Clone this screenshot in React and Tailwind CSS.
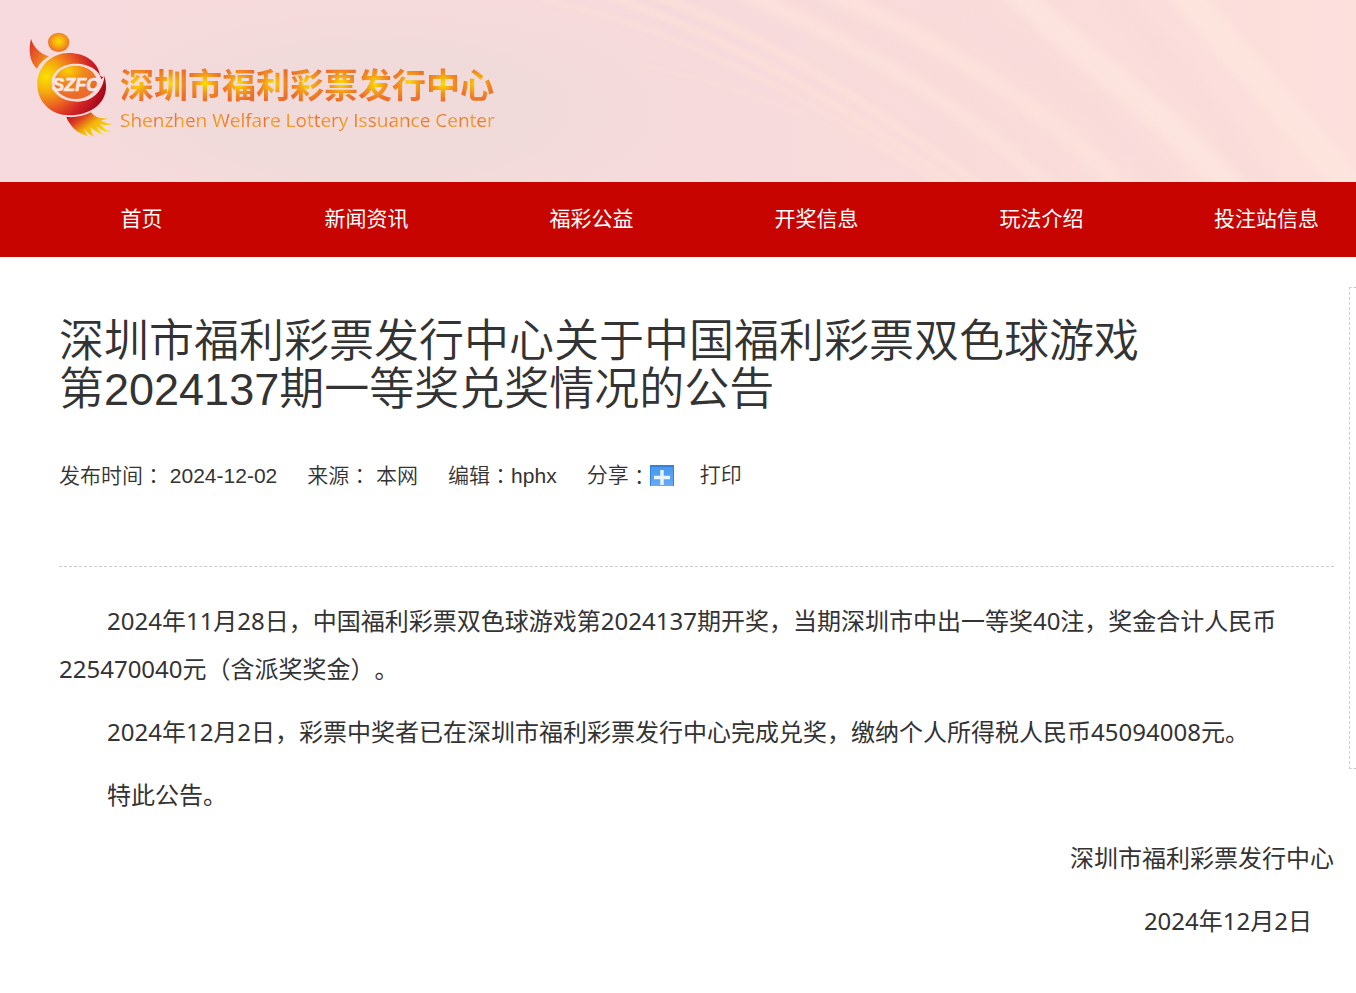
import React from 'react';

const navItems = ['首页', '新闻资讯', '福彩公益', '开奖信息', '玩法介绍', '投注站信息'];

const siteName = '深圳市福利彩票发行中心';

const HeaderBackground = () => (
  <svg className="absolute inset-0 w-full h-full" viewBox="0 0 1356 182" preserveAspectRatio="none" aria-hidden="true">
    <defs>
      <linearGradient id="bgBase" x1="0" y1="0" x2="1" y2="0">
        <stop offset="0" stopColor="#f7dadd" />
        <stop offset="0.5" stopColor="#f6dadc" />
        <stop offset="0.7" stopColor="#f9dcda" />
        <stop offset="1" stopColor="#fde0dc" />
      </linearGradient>
      <radialGradient id="bgShade" cx="0.5" cy="0.5" r="0.5">
        <stop offset="0" stopColor="#f0dada" />
        <stop offset="0.6" stopColor="#f1dada" stopOpacity="0.8" />
        <stop offset="1" stopColor="#f5dadc" stopOpacity="0" />
      </radialGradient>
      <filter id="soft" filterUnits="userSpaceOnUse" x="-20" y="-40" width="1400" height="270" colorInterpolationFilters="sRGB">
        <feGaussianBlur stdDeviation="5" />
      </filter>
      <filter id="fine" filterUnits="userSpaceOnUse" x="-20" y="-40" width="1400" height="270" colorInterpolationFilters="sRGB">
        <feGaussianBlur stdDeviation="2" />
      </filter>
    </defs>
    <rect width="1356" height="182" fill="url(#bgBase)" />
    <ellipse cx="370" cy="110" rx="330" ry="120" fill="url(#bgShade)" />
    <g fill="none" stroke="#fde3dc" filter="url(#soft)">
      <path d="M740 -10 C830 28 980 110 1060 195" strokeWidth="16" opacity="0.8" />
      <path d="M820 -10 C920 30 1040 100 1130 195" strokeWidth="16" opacity="0.7" />
    </g>
    <g fill="none" stroke="#fde6de" filter="url(#soft)">
      <path d="M1005 -20 C1060 40 1150 100 1240 195" strokeWidth="24" opacity="0.8" />
      <path d="M1175 -20 C1220 40 1290 110 1360 200" strokeWidth="28" opacity="0.9" />
    </g>
    <g fill="none" stroke="#fcdfd9" filter="url(#fine)">
      <path d="M540 0 C680 25 830 110 960 195" strokeWidth="6" opacity="0.6" />
      <path d="M600 -6 C720 30 850 110 965 190" strokeWidth="8" opacity="0.7" />
      <path d="M650 -6 C760 30 880 110 985 190" strokeWidth="10" opacity="0.7" />
      <path d="M640 65 C760 90 860 135 950 190" strokeWidth="4" opacity="0.5" />
    </g>
    <g fill="none" stroke="#f8dad9" filter="url(#soft)">
      <path d="M780 -5 C870 40 990 110 1070 195" strokeWidth="12" opacity="0.6" />
      <path d="M940 -5 C1010 45 1100 110 1180 195" strokeWidth="22" opacity="0.5" />
      <path d="M1110 -5 C1160 50 1220 120 1270 195" strokeWidth="26" opacity="0.4" />
    </g>
  </svg>
);

const LogoMark = () => (
  <svg className="w-[100px] h-[120px] shrink-0" viewBox="0 0 300 360" role="img" aria-label="SZFC">
    <defs>
      <radialGradient id="head" cx="0.5" cy="0.45" r="0.55">
        <stop offset="0" stopColor="#fbe000" />
        <stop offset="0.5" stopColor="#f6a912" />
        <stop offset="1" stopColor="#ec6a2a" />
      </radialGradient>
      <linearGradient id="arm" x1="0" y1="0.2" x2="0.8" y2="0.9">
        <stop offset="0" stopColor="#dc3626" />
        <stop offset="0.5" stopColor="#ea6524" />
        <stop offset="1" stopColor="#f39a18" />
      </linearGradient>
      <radialGradient id="body" gradientUnits="userSpaceOnUse" cx="78" cy="155" r="190">
        <stop offset="0" stopColor="#fbe300" />
        <stop offset="0.25" stopColor="#f5a80f" />
        <stop offset="0.5" stopColor="#ea5b22" />
        <stop offset="0.7" stopColor="#d22426" />
        <stop offset="1" stopColor="#a00018" />
      </radialGradient>
      <radialGradient id="core" cx="0.32" cy="0.15" r="0.75">
        <stop offset="0" stopColor="#f9d000" />
        <stop offset="0.5" stopColor="#f0861f" />
        <stop offset="1" stopColor="#ec6a2a" />
      </radialGradient>
      <linearGradient id="tail" x1="0" y1="0" x2="1" y2="0.7">
        <stop offset="0.1" stopColor="#bf0a22" />
        <stop offset="0.35" stopColor="#df4a20" />
        <stop offset="0.6" stopColor="#f2b40c" />
        <stop offset="1" stopColor="#f7e400" />
      </linearGradient>
    </defs>
    <ellipse cx="116" cy="52" rx="32" ry="29" fill="url(#head)" />
    <path d="M33 41 C24 78 30 112 51 131 C59 115 71 103 87 94 C60 85 41 68 33 41Z" fill="url(#arm)" />
    <path d="M146 84 C94 84 52 125 52 178 C52 232 94 271 148 271 C210 271 258 236 258 186 C258 174 256 163 253 153 C249 158 245 156 240 151 C234 111 196 84 146 84Z" fill="url(#body)" />
    <path d="M95 172 C95 138 128 116 168 116 C207 116 240 137 244 163 C249 160 252 152 254 147 C252 192 222 230 173 230 C128 230 95 207 95 172Z" fill="#f7dcde" />
    <ellipse cx="167" cy="172" rx="64" ry="50" fill="url(#core)" />
    <text x="97" y="198" fill="#fbe6e4" stroke="#fbe6e4" strokeWidth="2" fontSize="54" fontWeight="700" fontStyle="italic" fontFamily="Liberation Sans, Arial, sans-serif">SZFC</text>
    <path d="M139 276 C168 278 194 272 213 262 C224 276 238 282 264 280 C256 284 249 286 242 286 C252 294 264 297 278 296 C264 302 250 300 240 297 C249 308 258 315 272 322 C254 321 239 313 229 304 C235 315 241 323 252 329 C235 326 221 315 212 307 C213 318 216 327 223 335 C208 330 199 320 193 311 C195 321 199 329 205 334 C172 326 150 304 139 276Z" fill="url(#tail)" />
  </svg>
);

const SiteLogo = () => (
  <a href="#" className="relative flex items-start">
    <LogoMark />
    <span className="flex flex-col pt-[38px]">
      <span className="text-[34px] leading-[42px] font-bold whitespace-nowrap font-['Noto_Sans_CJK_SC',sans-serif]">
        {siteName.split('').map((char, i) => (
          <span key={i} className="text-transparent bg-clip-text bg-[radial-gradient(circle,#fbdf00_0%,#f3951c_10px,#ed6b2b_18px)]">{char}</span>
        ))}
      </span>
      <span className="mt-[3px] text-[19px] leading-6 whitespace-nowrap text-transparent bg-clip-text bg-[repeating-linear-gradient(90deg,#ec7030_0px,#f2a423_9px,#ec7030_18px)] font-['Open_Sans',sans-serif]">
        Shenzhen Welfare Lottery Issuance Center
      </span>
    </span>
  </a>
);

const ShareIcon = () => (
  <svg className="w-6 h-[21px]" viewBox="0 0 24 21" aria-hidden="true">
    <defs>
      <linearGradient id="share" x1="0" y1="0" x2="0" y2="1">
        <stop offset="0" stopColor="#4799ee" />
        <stop offset="1" stopColor="#66abf5" />
      </linearGradient>
    </defs>
    <rect width="24" height="21" fill="#3183dc" />
    <rect x="1" y="2" width="22" height="19" fill="url(#share)" />
    <path d="M12 5v15M4 12.5h16" stroke="#e9f4ff" strokeWidth="3.4" />
  </svg>
);

// full-width colon, centred in its cell
const Colon = () => <span className="font-['Noto_Sans_CJK_JP',sans-serif]">：</span>;

const App = () => {
  return (
    <div className="min-h-screen overflow-x-hidden bg-white text-[#333] font-['Noto_Sans','Noto_Sans_CJK_SC',sans-serif]">
      <header className="relative h-[182px] pl-5 pt-[25px]">
        <HeaderBackground />
        <SiteLogo />
      </header>

      <nav className="bg-[#c80400] pl-[29px] overflow-hidden">
        <ul className="flex">
          {navItems.map((item) => (
            <li key={item} className="w-[225px] shrink-0 text-center">
              <a href="#" className="block pb-0.5 text-[21px] leading-[73px] text-white">{item}</a>
            </li>
          ))}
        </ul>
      </nav>

      <div className="flex items-start">
        <main className="flex-1 min-w-0 pl-[59px] pr-[15px] pt-[61px] pb-10">
          <h1 className="w-[85%] text-[45px] leading-[48px] font-['Liberation_Sans','Noto_Sans_CJK_SC',sans-serif] font-[350]">
            深圳市福利彩票发行中心关于中国福利彩票双色球游戏第2024137期一等奖兑奖情况的公告
          </h1>

          <div className="flex items-center gap-[30px] mt-[45px] pb-[75px] border-b border-dashed border-[#ccc] text-[21px] leading-[30px] font-[350] font-['Liberation_Sans','Noto_Sans_CJK_SC',sans-serif]">
            <span>发布时间<Colon /> 2024-12-02</span>
            <span>来源<Colon /> 本网</span>
            <span>编辑<Colon />hphx</span>
            <div className="flex items-center gap-[26px]">
              <span className="flex items-center">
                分享<Colon />
                <button type="button" aria-label="分享"><ShareIcon /></button>
              </span>
              <button type="button">打印</button>
            </div>
          </div>

          <article className="flex flex-col gap-[15px] mt-[30px] text-2xl leading-[48px] [text-spacing-trim:space-all]">
            <p className="indent-12">
              2024年11月28日，中国福利彩票双色球游戏第2024137期开奖，当期深圳市中出一等奖40注，奖金合计人民币225470040元（含派奖奖金）。
            </p>
            <p className="indent-12">
              2024年12月2日，彩票中奖者已在深圳市福利彩票发行中心完成兑奖，缴纳个人所得税人民币45094008元。
            </p>
            <p className="indent-12">特此公告。</p>
            <p className="text-right">深圳市福利彩票发行中心</p>
            <p className="text-right pr-[22px]">2024年12月2日</p>
          </article>
        </main>

        <aside className="w-[7px] h-[482px] mt-[30px] shrink-0 border border-r-0 border-dashed border-[#ccc]" />
      </div>
    </div>
  );
};

export default App;
